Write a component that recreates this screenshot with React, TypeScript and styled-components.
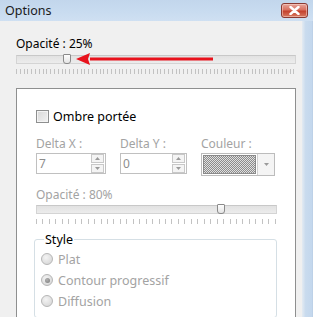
import React from "react";
import styled, { createGlobalStyle } from "styled-components";

const GlobalStyle = createGlobalStyle`
    html, body {
        margin: 0;
        padding: 0;
        background: #f0f0f0;
    }
    body {
        font-family: "Segoe UI", "Noto Sans", "Open Sans", sans-serif;
        font-size: 12px;
        color: #000;
    }
`;

const Window = styled.div`
    width: 313px;
    height: 317px;
    overflow: hidden;
    display: flex;
    flex-direction: column;
    background: #f0f0f0;
`;

const TitleBar = styled.div`
    height: 21px;
    flex: none;
    display: flex;
    align-items: center;
    justify-content: space-between;
    padding: 0 5px 0 5px;
    background: linear-gradient(180deg, #c2d6ec 0%, #c9dcf0 60%, #cfe0f2 100%);
`;

const Title = styled.span`
    font-size: 12.5px;
    color: #1a1a1a;
    margin-top: -1px;
`;

const CloseButton = styled.div`
    width: 25px;
    height: 13px;
    margin-top: -1px;
    border: 1px solid #8a3a33;
    border-radius: 3px;
    background: linear-gradient(180deg, #e6a59b 0%, #d8705f 45%, #c4412d 55%, #d67a62 100%);
    display: flex;
    align-items: center;
    justify-content: center;
    box-shadow: inset 0 0 0 1px rgba(255, 220, 210, 0.5);
`;

const Body = styled.div`
    flex: 1;
    display: flex;
    min-height: 0;
`;

const Client = styled.div`
    flex: 1;
    padding: 15px 6px 0 16px;
    background: #f0f0f0;
    display: flex;
    flex-direction: column;
`;

const RightFrame = styled.div`
    width: 12px;
    flex: none;
    background: linear-gradient(90deg, #e4ebf2 0%, #c9dbee 30%, #c3d7ed 85%, #9fb5cc 100%);
`;

const Label = styled.div<{ $disabled?: boolean }>`
    line-height: 16px;
    height: 16px;
    color: ${(p) => (p.$disabled ? "#a3a3a3" : "#000")};
    white-space: nowrap;
`;

const SliderWrap = styled.div<{ $gap?: number }>`
    position: relative;
    display: flex;
    flex-direction: column;
    padding-top: ${(p) => p.$gap ?? 3}px;
`;

const Track = styled.div`
    position: relative;
    height: 7px;
    border: 1px solid #d4d4d4;
    border-top-color: #c8c8c8;
    background: linear-gradient(180deg, #e2e2e2 0%, #ececec 100%);
`;

const Thumb = styled.div`
    position: absolute;
    top: -2px;
    width: 6px;
    height: 8px;
    border: 1px solid #8a8a8a;
    border-radius: 1px 1px 3px 3px;
    background: linear-gradient(180deg, #fdfdfd 0%, #e4e4e4 100%);
`;

const Ticks = styled.div<{ $step: number }>`
    height: 5px;
    margin-top: 5px;
    background: repeating-linear-gradient(
        90deg,
        #c2c2c2 0px,
        #c2c2c2 1px,
        transparent 1px,
        transparent ${(p) => p.$step}px
    );
`;

const Arrow = styled.svg`
    position: absolute;
    left: 58px;
    top: 0px;
`;

const Panel = styled.div`
    margin-top: 14px;
    border: 1px solid #8e8f8f;
    background: #fff;
    padding: 19px 18px 20px 19px;
    display: flex;
    flex-direction: column;
`;

const CheckRow = styled.div`
    display: flex;
    align-items: center;
    gap: 4px;
    font-size: 12.5px;
`;

const CheckBox = styled.span`
    width: 11px;
    height: 11px;
    border: 1px solid #8e8f8f;
    background: linear-gradient(135deg, #d8d8d8 0%, #f2f2f2 100%);
    box-shadow: inset 0 0 0 1px #f4f4f4;
`;

const FieldGrid = styled.div`
    display: grid;
    grid-template-columns: 70px 67px 74px;
    column-gap: 14px;
    margin-top: 11px;
`;

const Field = styled.div`
    display: flex;
    flex-direction: column;
    gap: 1px;
`;

const SpinInput = styled.div`
    height: 19px;
    border: 1px solid #c0c0c0;
    display: flex;
    align-items: center;
    justify-content: space-between;
    padding: 0 1px 0 2px;
    background: #fff;
    color: #8d8d8d;
`;

const SpinButtons = styled.div`
    display: flex;
    flex-direction: column;
    gap: 1px;
`;

const SpinButton = styled.div`
    width: 11px;
    height: 7px;
    border: 1px solid #c8c8c8;
    background: #f4f4f4;
    display: flex;
    align-items: center;
    justify-content: center;
`;

const ColorCombo = styled.div`
    height: 21px;
    border: 1px solid #bcbcbc;
    display: flex;
    background: #fff;
`;

const Swatch = styled.div`
    flex: 1;
    margin: 1px;
    border: 1px solid #8a8a8a;
    background-color: #b8b8b8;
    background-image: repeating-conic-gradient(#8c8c8c 0% 25%, #e0e0e0 0% 50%);
    background-size: 2px 2px;
`;

const DropButton = styled.div`
    width: 16px;
    border-left: 1px solid #d0d0d0;
    background: #f4f4f4;
    display: flex;
    align-items: center;
    justify-content: center;
`;

const InnerSlider = styled.div`
    margin-top: 11px;
    display: flex;
    flex-direction: column;
`;

const GroupBox = styled.fieldset`
    margin: 7px 0 0 -2px;
    width: 243px;
    box-sizing: border-box;
    border: 1px solid #d5dfe5;
    border-radius: 3px;
    padding: 3px 6px 8px 6px;
    display: flex;
    flex-direction: column;
    gap: 5px;
`;

const Legend = styled.legend`
    padding: 0 1px;
    margin-left: 3px;
    font-size: 12.5px;
`;

const RadioRow = styled.div`
    display: flex;
    align-items: center;
    gap: 5px;
    height: 16px;
    color: #a3a3a3;
    font-size: 12.5px;
`;

const Radio = styled.span<{ $checked?: boolean }>`
    width: 10px;
    height: 10px;
    border-radius: 50%;
    border: 1px solid #b6b6b6;
    background: radial-gradient(circle at 40% 35%, #f4f4f4 0%, #dcdcdc 70%, #d0d0d0 100%);
    display: flex;
    align-items: center;
    justify-content: center;
    &::after {
        content: "";
        display: ${(p) => (p.$checked ? "block" : "none")};
        width: 5px;
        height: 5px;
        border-radius: 50%;
        background: radial-gradient(circle at 40% 35%, #b0b0b0 0%, #7c7c7c 100%);
    }
`;

const SmallArrow = ({ up }: { up?: boolean }) => (
    <svg width="5" height="3" viewBox="0 0 5 3">
        <path d={up ? "M0 3 L2.5 0 L5 3 Z" : "M0 0 L2.5 3 L5 0 Z"} fill="#9a9a9a" />
    </svg>
);

const Spin = ({ value }: { value: string }) => (
    <SpinInput>
        <span>{value}</span>
        <SpinButtons>
            <SpinButton>
                <SmallArrow up />
            </SpinButton>
            <SpinButton>
                <SmallArrow />
            </SpinButton>
        </SpinButtons>
    </SpinInput>
);

const App = () => {
    return (
        <Window>
            <GlobalStyle />
            <TitleBar>
                <Title>Options</Title>
                <CloseButton>
                    <svg width="11" height="9" viewBox="0 0 11 9">
                        <path
                            d="M1.5 1 L9.5 8 M9.5 1 L1.5 8"
                            stroke="#fff"
                            strokeWidth="2.4"
                            strokeLinecap="round"
                        />
                    </svg>
                </CloseButton>
            </TitleBar>
            <Body>
                <Client>
                    <Label>Opacité : 25%</Label>
                    <SliderWrap>
                        <Track>
                            <Thumb style={{ left: "46px" }} />
                        </Track>
                        <Ticks $step={3.8} />
                        {/* annotation arrow pointing at the thumb */}
                        <Arrow width="160" height="14" viewBox="0 0 160 14">
                            <path d="M16 7 L139 7" stroke="#e8121c" strokeWidth="3" />
                            <path d="M2 7 L16 1 L14 7 L16 13 Z" fill="#e8121c" />
                        </Arrow>
                    </SliderWrap>
                    <Panel>
                        <CheckRow>
                            <CheckBox />
                            <span>Ombre portée</span>
                        </CheckRow>
                        <FieldGrid>
                            <Field>
                                <Label $disabled>Delta X :</Label>
                                <Spin value="7" />
                            </Field>
                            <Field>
                                <Label $disabled>Delta Y :</Label>
                                <Spin value="0" />
                            </Field>
                            <Field>
                                <Label $disabled>Couleur :</Label>
                                <ColorCombo>
                                    <Swatch />
                                    <DropButton>
                                        <SmallArrow />
                                    </DropButton>
                                </ColorCombo>
                            </Field>
                        </FieldGrid>
                        <InnerSlider>
                            <Label $disabled>Opacité : 80%</Label>
                            <SliderWrap $gap={2}>
                                <Track>
                                    <Thumb style={{ left: "180px" }} />
                                </Track>
                                <Ticks $step={6.45} />
                            </SliderWrap>
                        </InnerSlider>
                        <GroupBox>
                            <Legend>Style</Legend>
                            <RadioRow>
                                <Radio />
                                <span>Plat</span>
                            </RadioRow>
                            <RadioRow>
                                <Radio $checked />
                                <span>Contour progressif</span>
                            </RadioRow>
                            <RadioRow>
                                <Radio />
                                <span>Diffusion</span>
                            </RadioRow>
                        </GroupBox>
                    </Panel>
                </Client>
                <RightFrame />
            </Body>
        </Window>
    );
};

export default App;
